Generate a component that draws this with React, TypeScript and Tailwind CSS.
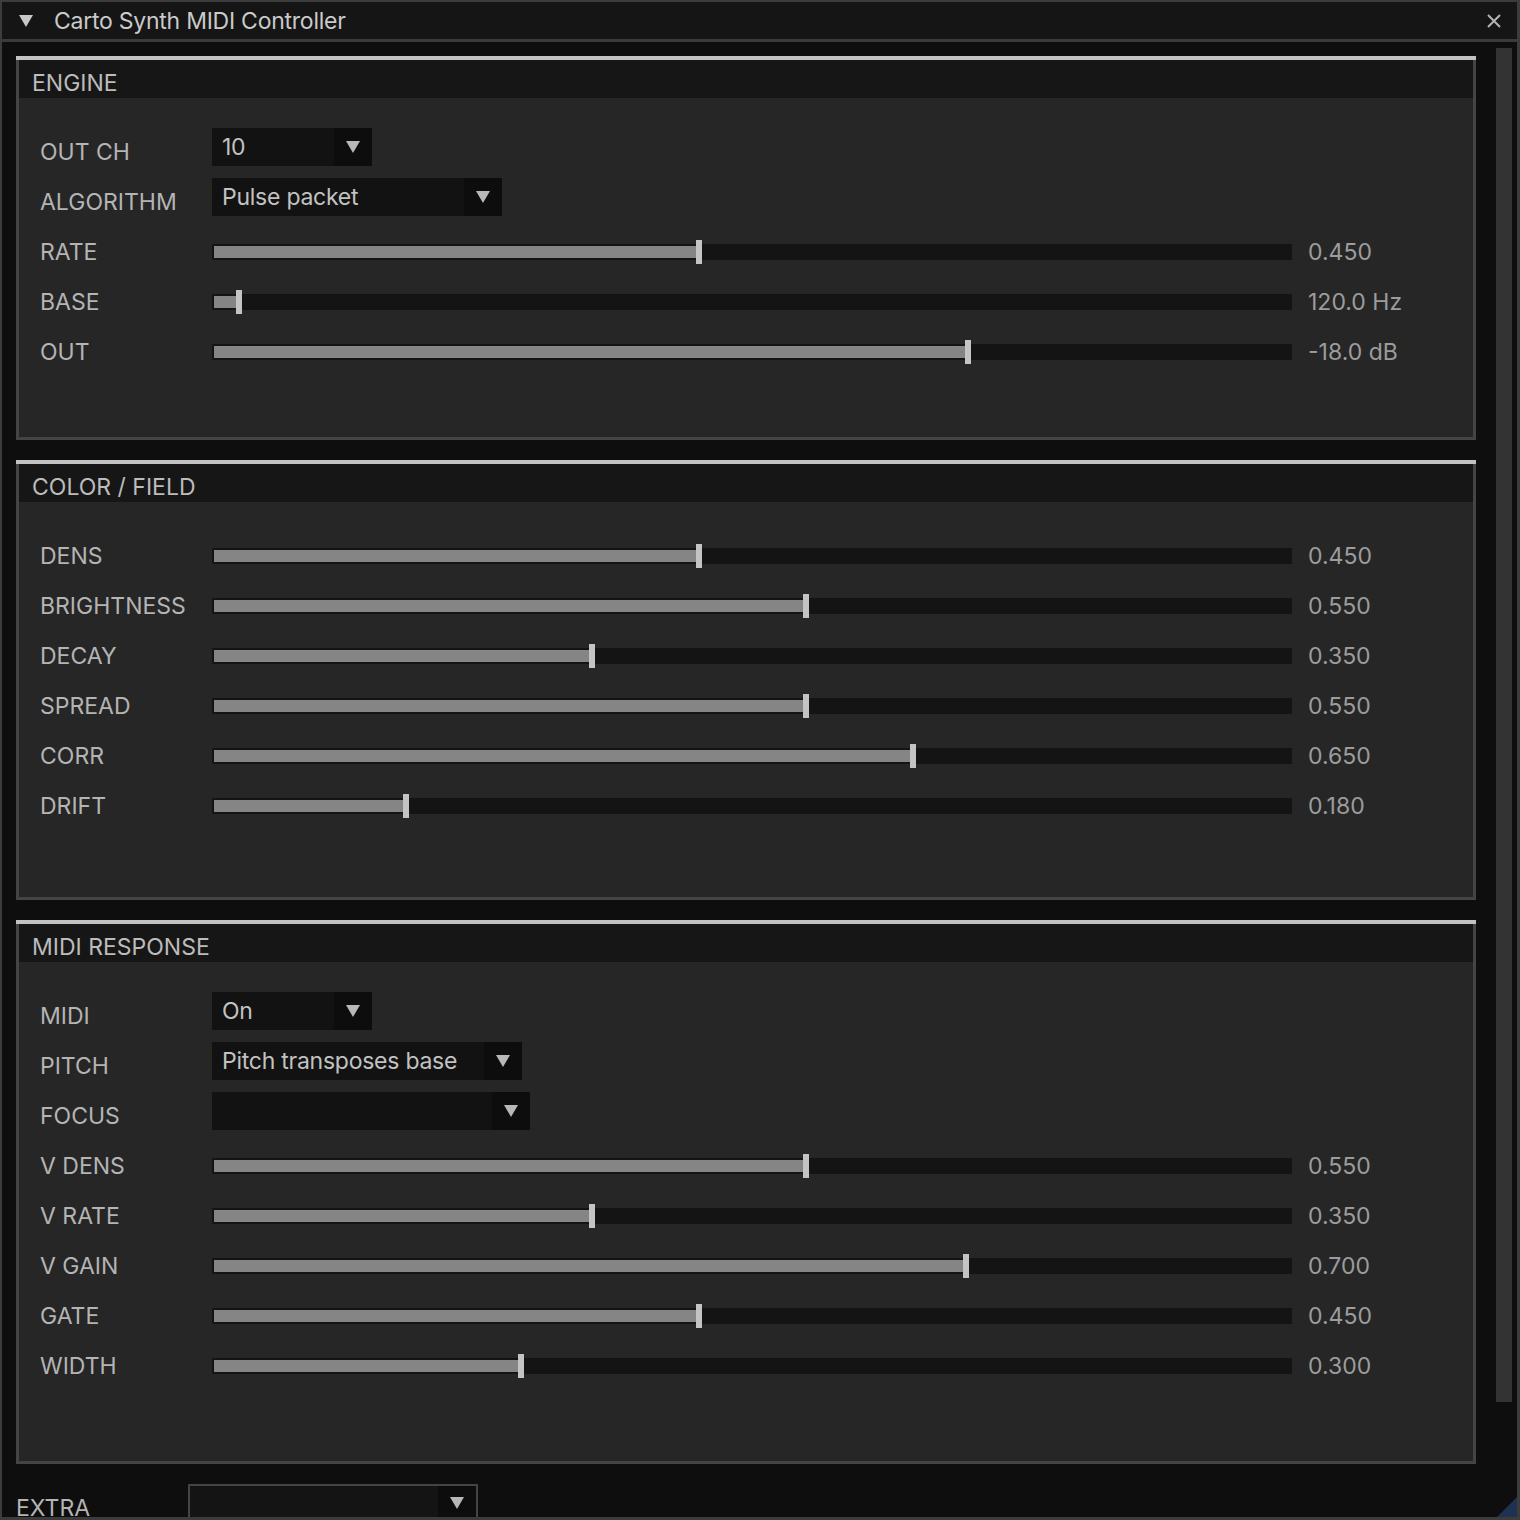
import React from 'react';

type Row =
  | { kind: 'select'; label: string; value: string; width: number }
  | { kind: 'slider'; label: string; frac: number; text: string };

interface Section {
  title: string;
  bodyHeight: number;
  rows: Row[];
}

const SECTIONS: Section[] = [
  {
    title: 'ENGINE',
    bodyHeight: 339,
    rows: [
      { kind: 'select', label: 'OUT CH', value: '10', width: 160 },
      { kind: 'select', label: 'ALGORITHM', value: 'Pulse packet', width: 290 },
      { kind: 'slider', label: 'RATE', frac: 0.45, text: '0.450' },
      { kind: 'slider', label: 'BASE', frac: 0.0206, text: '120.0 Hz' },
      { kind: 'slider', label: 'OUT', frac: 0.702, text: '-18.0 dB' },
    ],
  },
  {
    title: 'COLOR / FIELD',
    bodyHeight: 395,
    rows: [
      { kind: 'slider', label: 'DENS', frac: 0.45, text: '0.450' },
      { kind: 'slider', label: 'BRIGHTNESS', frac: 0.55, text: '0.550' },
      { kind: 'slider', label: 'DECAY', frac: 0.35, text: '0.350' },
      { kind: 'slider', label: 'SPREAD', frac: 0.55, text: '0.550' },
      { kind: 'slider', label: 'CORR', frac: 0.65, text: '0.650' },
      { kind: 'slider', label: 'DRIFT', frac: 0.177, text: '0.180' },
    ],
  },
  {
    title: 'MIDI RESPONSE',
    bodyHeight: 499,
    rows: [
      { kind: 'select', label: 'MIDI', value: 'On', width: 160 },
      { kind: 'select', label: 'PITCH', value: 'Pitch transposes base', width: 310 },
      { kind: 'select', label: 'FOCUS', value: '', width: 318 },
      { kind: 'slider', label: 'V DENS', frac: 0.55, text: '0.550' },
      { kind: 'slider', label: 'V RATE', frac: 0.35, text: '0.350' },
      { kind: 'slider', label: 'V GAIN', frac: 0.7, text: '0.700' },
      { kind: 'slider', label: 'GATE', frac: 0.45, text: '0.450' },
      { kind: 'slider', label: 'WIDTH', frac: 0.284, text: '0.300' },
    ],
  },
];

function DownTriangle({ className }: { className?: string }) {
  return (
    <svg viewBox="0 0 16 14" className={className}>
      <path d="M1 1 L15 1 L8 13 Z" fill="currentColor" />
    </svg>
  );
}

function Combo({ value, width, bordered }: { value: string; width: number; bordered?: boolean }) {
  return (
    <div
      className={
        'flex h-[38px] ' +
        (bordered ? 'border-2 border-[#444444] bg-[#141414]' : 'bg-[#121212]')
      }
      style={{ width }}
    >
      <div className="flex-1 flex items-center pl-[10px] text-[#c2c2c2] whitespace-nowrap tracking-[-0.25px]">
        {value}
      </div>
      <div className="w-[38px] flex items-center justify-center bg-[#0d0d0d]">
        <DownTriangle className="w-[16px] h-[14px] text-[#b8b8b8]" />
      </div>
    </div>
  );
}

function Slider({ frac, text }: { frac: number; text: string }) {
  const pos = 2 + frac * 1070;
  return (
    <div className="flex items-center">
      <div className="relative w-[1080px] h-[16px] bg-[#141414]">
        <div className="absolute left-[2px] top-[2px] h-[12px] bg-[#858585]" style={{ width: pos - 2 }} />
        <div className="absolute top-[-4px] w-[6px] h-[24px] bg-[#c4c4c4]" style={{ left: pos }} />
      </div>
      <span className="ml-[16px] text-[#9c9c9c] whitespace-nowrap">{text}</span>
    </div>
  );
}

function ControlRow({ row }: { row: Row }) {
  return (
    <div className="flex h-[50px] shrink-0">
      <div className="w-[172px] flex items-center pt-[1px] text-[#b4b4b4]">{row.label}</div>
      {row.kind === 'select' ? (
        <div className="pt-[2px]">
          <Combo value={row.value} width={row.width} />
        </div>
      ) : (
        <div className="flex items-center pt-[1px]">
          <Slider frac={row.frac} text={row.text} />
        </div>
      )}
    </div>
  );
}

function Panel({ section }: { section: Section }) {
  return (
    <div className="w-[1460px] shrink-0">
      <div className="h-[4px] bg-[#c2c2c2]" />
      <div className="border-x-[3px] border-b-[3px] border-[#444444]">
        <div className="h-[38px] bg-[#161616] pl-[13px] pt-[9px] text-[#bcbcbc] leading-[28px]">
          {section.title}
        </div>
        <div className="bg-[#262626] pl-[21px] pt-[28px]" style={{ height: section.bodyHeight }}>
          {section.rows.map((row) => (
            <ControlRow key={row.label} row={row} />
          ))}
        </div>
      </div>
    </div>
  );
}

export default function App() {
  return (
    <div
      className="relative w-[1520px] h-[1520px] overflow-hidden bg-[#0e0e0e] border-l-2 border-t-2 border-r-[3px] border-b-[3px] border-[#3c3c3c] text-[23px] leading-[28px]"
      style={{ fontFamily: 'Inter, "Noto Sans", sans-serif' }}
    >
      {/* title bar */}
      <div className="flex items-center h-[40px] bg-[#151515] border-b-[3px] border-[#3a3a3a] pl-[16px] pr-[16px]">
        <DownTriangle className="w-[16px] h-[14px] text-[#c8c8c8]" />
        <span className="ml-[20px] pt-[1px] text-[#cacaca] tracking-[-0.25px]">Carto Synth MIDI Controller</span>
        <svg viewBox="0 0 14 14" className="ml-auto w-[14px] h-[14px] text-[#b4b4b4]">
          <path d="M1 1 L13 13 M13 1 L1 13" stroke="currentColor" strokeWidth="2" />
        </svg>
      </div>

      <div className="flex h-[1475px] overflow-hidden">
        <div className="flex-1 pl-[14px] pt-[14px] flex flex-col gap-[20px]">
          {SECTIONS.map((s) => (
            <Panel key={s.title} section={s} />
          ))}
          <div className="flex h-[50px] shrink-0 -mt-[2px]">
            <div className="w-[172px] flex items-center pt-[1px] text-[#b4b4b4]">EXTRA</div>
            <div className="pt-[2px]">
              <Combo value="" width={290} bordered />
            </div>
          </div>
        </div>
        <div className="w-[21px] pt-[6px]">
          <div className="w-[16px] h-[1354px] bg-[#333333]" />
        </div>
      </div>

      {/* resize grip */}
      <svg viewBox="0 0 20 20" className="absolute right-0 bottom-0 w-[20px] h-[20px]">
        <path d="M20 0 L20 20 L0 20 Z" fill="#1f3150" />
      </svg>
    </div>
  );
}
